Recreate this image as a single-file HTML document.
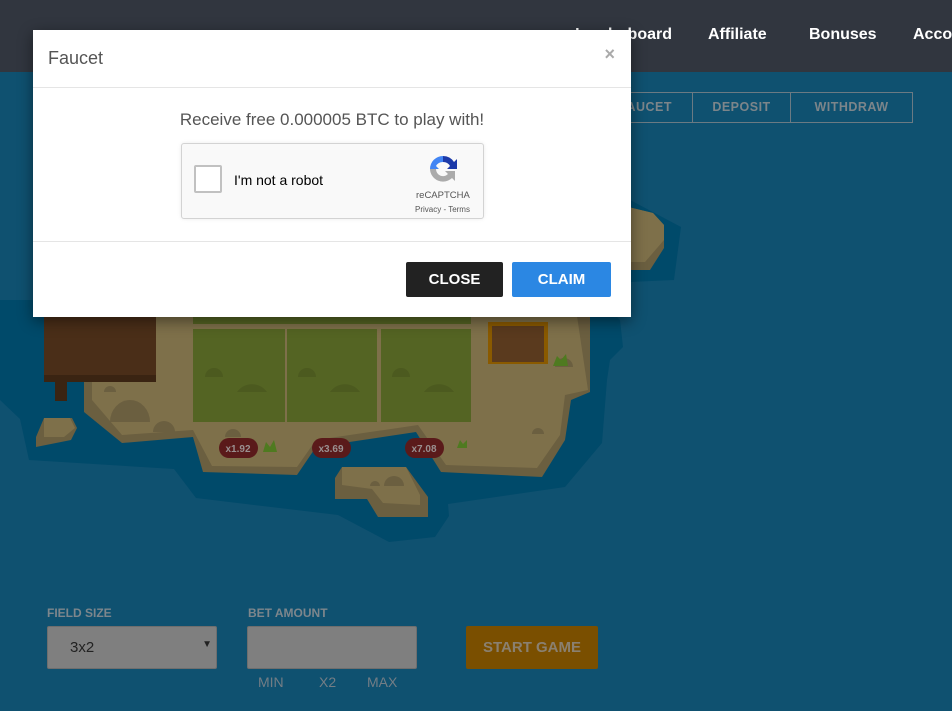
<!DOCTYPE html>
<html><head><meta charset="utf-8"><style>
*{margin:0;padding:0;box-sizing:border-box}
body{width:952px;height:711px;overflow:hidden;background:#0f5170;font-family:"Liberation Sans",sans-serif;position:relative}
.hdr{position:absolute;left:0;top:0;width:952px;height:72px;background:#31363f}
.nav{position:absolute;top:26px;color:#fff;font-weight:bold;font-size:16px}
.tabs{position:absolute;left:598px;top:92px;height:31px;border:1px solid #6b7a83;display:flex}
.tabs div{color:#7c858a;font-weight:bold;font-size:12.5px;letter-spacing:.5px;line-height:29px;text-align:center;border-left:1px solid #6b7a83}
.lbl{position:absolute;top:606px;color:#7d868c;font-weight:bold;font-size:12px}
.inp{position:absolute;top:626px;height:43px;background:#7f7f7f;border:1px solid #6e6e6e;border-radius:2px}
.sm{position:absolute;top:674px;color:#737d85;font-size:14px}
.modal{position:absolute;left:33px;top:30px;width:598px;height:287px;background:#fff;box-shadow:0 4px 14px rgba(0,0,0,.45)}
.btn{position:absolute;height:35px;color:#fff;font-weight:bold;font-size:15px;line-height:35px;text-align:center;border-radius:2px}
</style></head><body>
<div class="hdr"></div>
<div class="nav" style="left:560px;width:112px;text-align:right">Leaderboard</div>
<div class="nav" style="left:708px">Affiliate</div>
<div class="nav" style="left:809px">Bonuses</div>
<div class="nav" style="left:913px">Account</div>
<div class="tabs"><div style="width:93px;border-left:none">FAUCET</div><div style="width:98px">DEPOSIT</div><div style="width:122px">WITHDRAW</div></div>

<svg style="position:absolute;left:0;top:0" width="952" height="711">
<polygon fill="#004a6a" points="0,300 600,300 620,320 623,347 610,360 607,380 602,443 565,487 448,504 449,516 435,537 389,542 338,515 196,498 174,469 29,460 20,419 0,400"/>
<polygon fill="#004a6a" points="630,200 681,227 674,280 630,282"/>
<polygon fill="#6b5f40" points="620,205 653,213 664,225 664,248 650,270 630,270 620,260"/>
<polygon fill="#7e704a" points="620,205 653,213 664,225 664,240 645,262 620,262"/>
<polygon fill="#6b5f40" points="62,316 590,316 590,392 571,400 565,440 542,477 441,472 416,432 316,447 297,475 203,472 193,437 122,443 84,412 84,380 62,380"/>
<polygon fill="#7e704a" points="70,316 577,316 588,390 565,395 560,435 537,468 446,465 418,425 316,440 297,467 212,466 193,430 122,435 92,400 92,380 70,380"/>
<polygon fill="#6b5f40" points="342,467 406,467 428,497 428,517 378,517 367,499 335,499 335,478"/>
<polygon fill="#7e704a" points="342,467 406,467 420,495 420,505 383,503 372,489 342,485"/>
<polygon fill="#6b5f40" points="44,418 72,418 77,428 71,440 36,447 36,437"/>
<polygon fill="#7e704a" points="44,418 70,418 75,428 64,437 44,437"/>
<rect x="193" y="316" width="278" height="8" fill="#546423"/>
<rect x="193" y="329" width="92" height="93" fill="#546423"/>
<rect x="287" y="329" width="90" height="93" fill="#546423"/>
<rect x="381" y="329" width="90" height="93" fill="#546423"/>
<g fill="#4c5a1f"><path d="M237,392a19,20 0 0 1 30,0z"/><path d="M330,392a19,20 0 0 1 30,0z"/><path d="M424,392a19,20 0 0 1 30,0z"/><path d="M205,377a9,9 0 0 1 18,0z"/><path d="M298,377a9,9 0 0 1 18,0z"/><path d="M392,377a9,9 0 0 1 18,0z"/></g>
<g fill="#6b5f40"><path d="M110,422a20,22 0 0 1 40,0z"/><path d="M153,432a11,11 0 0 1 22,0z"/><path d="M104,392a6,6 0 0 1 12,0z"/><path d="M225,437a8,8 0 0 1 16,0z"/><path d="M370,486a5,5 0 0 1 10,0z"/><path d="M384,486a10,10 0 0 1 20,0z"/><path d="M532,434a6,6 0 0 1 12,0z"/><path d="M555,367a9,9 0 0 1 18,0z"/></g>
<rect x="44" y="316" width="112" height="66" fill="#4a2e18"/>
<rect x="44" y="375" width="112" height="7" fill="#3a2412"/>
<rect x="55" y="382" width="12" height="19" fill="#3a2412"/>
<rect x="488" y="322" width="60" height="42" fill="#8a5a00"/>
<rect x="492" y="326" width="52" height="36" fill="#5a3a1e"/>
<g fill="#5a1a1a"><rect x="219" y="438" width="39" height="20" rx="10"/><rect x="312" y="438" width="39" height="20" rx="10"/><rect x="405" y="438" width="39" height="20" rx="10"/></g>
<g fill="#9a9090" font-family="Liberation Sans" font-weight="bold" font-size="10" text-anchor="middle"><text x="238" y="452">x1.92</text><text x="331" y="452">x3.69</text><text x="424" y="452">x7.08</text></g>
<g fill="#4f7a20"><polygon points="263,452 266,442 270,447 274,440 277,452"/><polygon points="457,448 460,440 463,444 467,440 467,448"/><polygon points="553,366 557,356 561,360 566,354 568,366"/></g>
</svg>

<div class="lbl" style="left:47px">FIELD SIZE</div>
<div class="lbl" style="left:248px">BET AMOUNT</div>
<div class="inp" style="left:47px;width:170px"><span style="position:absolute;left:22px;top:12px;font-size:15px;color:#222">3x2</span><span style="position:absolute;right:4px;top:12px;font-size:10px;color:#222">▼</span></div>
<div class="inp" style="left:247px;width:170px"></div>
<div style="position:absolute;left:466px;top:626px;width:132px;height:43px;background:#7a4f00;border-radius:2px;color:#8a8070;font-weight:bold;font-size:15px;line-height:43px;text-align:center">START GAME</div>
<div class="sm" style="left:258px">MIN</div><div class="sm" style="left:319px">X2</div><div class="sm" style="left:367px">MAX</div>

<div class="modal">
<div style="position:absolute;left:15px;top:18px;font-size:18px;color:#555">Faucet</div>
<div style="position:absolute;right:16px;top:14px;font-size:18px;font-weight:bold;color:#aaa">×</div>
<div style="position:absolute;left:0;top:57px;width:598px;height:1px;background:#e5e5e5"></div>
<div style="position:absolute;left:0;top:80px;width:598px;text-align:center;font-size:17px;color:#555">Receive free 0.000005 BTC to play with!</div>
<div style="position:absolute;left:148px;top:113px;width:303px;height:76px;background:#f9f9f9;border:1px solid #d3d3d3;border-radius:3px;box-shadow:0 0 4px rgba(0,0,0,.08)">
<div style="position:absolute;left:12px;top:21px;width:28px;height:28px;background:#fff;border:2px solid #c1c1c1;border-radius:2px"></div>
<div style="position:absolute;left:52px;top:28px;font-size:14px;color:#000">I'm not a robot</div>
<svg style="position:absolute;left:245px;top:9px" width="32" height="32" viewBox="0 0 32 32"><path d="M16 3a13 13 0 0 1 11 6l3-3v10h-10l3-3a8 8 0 0 0-7-4z" fill="#1c3aa9"/><path d="M3 16a13 13 0 0 1 13-13v6a8 8 0 0 0-7 4l3 3H3z" fill="#4285f4"/><path d="M3 16h6a7 7 0 0 0 12 5l-3-3h10v10l-3-3a13 13 0 0 1-22-9z" fill="#ababab"/></svg>
<div style="position:absolute;left:234px;top:46px;font-size:9.5px;color:#555">reCAPTCHA</div>
<div style="position:absolute;left:233px;top:61px;font-size:8px;color:#555">Privacy - Terms</div>
</div>
<div style="position:absolute;left:0;top:211px;width:598px;height:1px;background:#e5e5e5"></div>
<div class="btn" style="left:373px;width:97px;background:#222;top:232px">CLOSE</div>
<div class="btn" style="left:479px;width:99px;background:#2b87e3;top:232px">CLAIM</div>
</div>
</body></html>
